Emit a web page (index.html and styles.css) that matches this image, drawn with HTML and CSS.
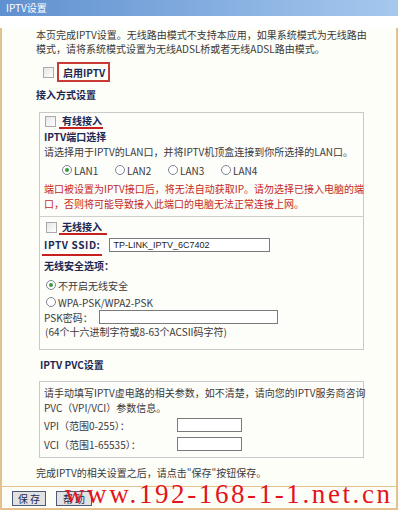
FILE: index.html
```html
<!DOCTYPE html>
<html lang="zh-CN">
<head>
    <meta charset="UTF-8">
    <meta name="viewport" content="width=device-width, initial-scale=1.0">
    <title>IPTV设置</title>
    <link rel="stylesheet" href="styles.css">
</head>
<body>
    <div class="win">
        <div class="titlebar">IPTV设置</div>

        <div class="content">
            <p class="intro">本页完成IPTV设置。无线路由模式不支持本应用，如果系统模式为无线路由<br>模式，请将系统模式设置为无线ADSL桥或者无线ADSL路由模式。</p>

            <div class="enable-row">
                <span class="chk"></span>
                <span class="enable-box">启用IPTV</span>
            </div>

            <div class="heading">接入方式设置</div>

            <div class="group">
                <!-- wired -->
                <div class="section wired">
                    <div class="sec-head"><span class="chk"></span><span class="mark">有线接入</span></div>
                    <div class="sub">IPTV端口选择</div>
                    <div class="line">请选择用于IPTV的LAN口，并将IPTV机顶盒连接到你所选择的LAN口。</div>
                    <div class="lan-row">
                        <span class="opt"><span class="radio on"></span>LAN1</span>
                        <span class="opt"><span class="radio"></span>LAN2</span>
                        <span class="opt"><span class="radio"></span>LAN3</span>
                        <span class="opt"><span class="radio"></span>LAN4</span>
                    </div>
                    <div class="warn">端口被设置为IPTV接口后，将无法自动获取IP。请勿选择已接入电脑的端<br>口，否则将可能导致接入此端口的电脑无法正常连接上网。</div>
                </div>

                <!-- wireless -->
                <div class="section wireless">
                    <div class="sec-head"><span class="chk"></span><span class="mark">无线接入</span></div>
                    <div class="ssid-row">
                        <span class="ssid-label">IPTV SSID:</span>
                        <input class="field ssid" type="text" value="TP-LINK_IPTV_6C7402">
                    </div>
                    <div class="sub sec-opt">无线安全选项：</div>
                    <div class="radio-line first"><span class="radio on"></span>不开启无线安全</div>
                    <div class="radio-line"><span class="radio"></span>WPA-PSK/WPA2-PSK</div>
                    <div class="psk-row">
                        <span>PSK密码：</span>
                        <input class="field psk" type="text">
                    </div>
                    <div class="hint">(64个十六进制字符或8-63个ACSII码字符)</div>
                </div>
            </div>

            <div class="heading pvc-head">IPTV PVC设置</div>

            <div class="group pvc">
                <div class="line">请手动填写IPTV虚电路的相关参数，如不清楚，请向您的IPTV服务商咨询<br>PVC（VPI/VCI）参数信息。</div>
                <div class="pvc-row vpi">
                    <span class="pvc-label">VPI（范围0-255）：</span>
                    <input class="field small" type="text">
                </div>
                <div class="pvc-row vci">
                    <span class="pvc-label">VCI（范围1-65535）：</span>
                    <input class="field small" type="text">
                </div>
            </div>

            <p class="done">完成IPTV的相关设置之后，请点击"保存"按钮保存。</p>
        </div>

        <div class="foot">
            <button class="btn save">保 存</button>
            <button class="btn help">帮 助</button>
        </div>

        <div class="watermark">www.192-168-1-1.net.cn</div>
    </div>
</body>
</html>
```

FILE: styles.css
```css
body { margin: 0; background: #fff; font-family: "Noto Sans CJK SC", "Liberation Sans", sans-serif; font-size: 10px; color: #3a3a3a; }
.win { position: relative; width: 398px; }
.titlebar { height: 16px; line-height: 16px; padding-left: 6px; color: #fff; background: linear-gradient(to right, #5f90cf, #a6c8ee); }

.content { padding: 0 0 6px 34px; border-left: 2px solid #e4c08e; border-right: 2px solid #e4c08e; background: #fefef8; }
.intro { margin: 12px 0 0; line-height: 14px; white-space: nowrap; }

.enable-row { display: flex; align-items: center; height: 20px; margin-top: 6px; }
.enable-row .chk { margin-left: 7px; }
.enable-box { display: flex; align-items: center; box-sizing: border-box; width: 53px; height: 20px; margin-left: 3px; padding-left: 4px; border: 2px solid #c73a36; font-weight: bold; color: #1c2752; }

.heading { margin-top: 6px; line-height: 14px; font-weight: bold; color: #1c2752; }

.chk { display: inline-block; box-sizing: border-box; width: 11px; height: 11px; border: 1px solid #a9a9a9; background: linear-gradient(135deg, #e6e6e6, #fff); }

.group { box-sizing: border-box; width: 325px; margin: 10px 0 0 3px; border: 1px solid #c9c9c9; background: #fdfdfa; }
.section { padding: 0 4px; }
.wired { padding-top: 1px; padding-bottom: 5px; border-bottom: 1px solid #cfcfcf; }
.wireless { padding-top: 3px; padding-bottom: 10px; }

.sec-head { display: flex; align-items: center; height: 15px; }
.sec-head .chk { margin-left: 1px; }
.wireless .sec-head .chk { margin-left: 2px; }
.mark { margin-left: 3px; padding: 0 1px 0 3px; line-height: 13px; border-bottom: 2px solid #c8201c; font-weight: bold; color: #1c2752; }
.wireless .mark { margin-left: 2px; padding-right: 5px; }

.sub { line-height: 15px; font-weight: bold; color: #1c2752; }
.line { line-height: 15px; white-space: nowrap; }
.lan-row { display: flex; height: 16px; margin-top: 3px; padding-left: 18px; align-items: center; }
.opt { display: flex; align-items: center; width: 53px; }

.radio { position: relative; display: inline-block; box-sizing: border-box; width: 10px; height: 10px; margin-right: 2px; border: 1px solid #7c8796; border-radius: 50%; background: #fff; }
.radio.on::after { content: ""; position: absolute; left: 2px; top: 2px; width: 4px; height: 4px; border-radius: 50%; background: #3a9a3a; }

.warn { margin-top: 3px; line-height: 15px; color: #c42a24; white-space: nowrap; }

.field { box-sizing: border-box; height: 14px; margin: 0; padding: 0 3px; border: 1px solid #7a7a7a; background: #fff; font-family: "Liberation Sans", sans-serif; font-size: 9px; color: #222; }
.ssid-row { display: flex; align-items: flex-start; margin-top: 3px; }
.ssid-label { margin-left: -2px; padding: 0 2px 2px; line-height: 14px; border-bottom: 2px solid #c8201c; font-weight: bold; color: #1c2752; letter-spacing: 0.6px; }
.ssid { width: 161px; margin-left: 7px; }
.sec-opt { margin-top: 2px; }
.radio-line { display: flex; align-items: center; height: 16px; margin-top: 1px; padding-left: 2px; }
.radio-line.first { margin-top: 4px; }
.psk-row { display: flex; align-items: center; height: 14px; }
.psk { width: 179px; margin-left: 6px; }
.hint { margin-top: 1px; line-height: 14px; padding-left: 1px; }

.pvc-head { margin: 8px 0 0 4px; }
.group.pvc { margin-top: 9px; padding: 3px 4px 6px; }
.pvc-row { display: flex; align-items: center; height: 14px; }
.pvc-row.vpi { margin-top: 3px; }
.pvc-row.vci { margin-top: 5px; }
.pvc-label { width: 133px; }
.small { width: 65px; }

.done { margin: 8px 0 0; line-height: 14px; }

.foot { display: flex; gap: 10px; padding: 4px 0 2px 10px; border: 2px solid #e4c08e; border-top-width: 1px; background: #fefef8; }
.btn { box-sizing: border-box; height: 15px; margin: 0; padding: 0; border: 1px solid #4c5a78; background: #e2e2e2; font-family: inherit; font-size: 10px; line-height: 13px; color: #1c2752; }
.btn.save { width: 34px; }
.btn.help { width: 36px; }

.watermark { position: absolute; left: 65px; top: 481px; font-family: "Liberation Serif", serif; font-size: 27px; line-height: 27px; letter-spacing: 2.6px; color: #e3141c; white-space: nowrap; }
```
